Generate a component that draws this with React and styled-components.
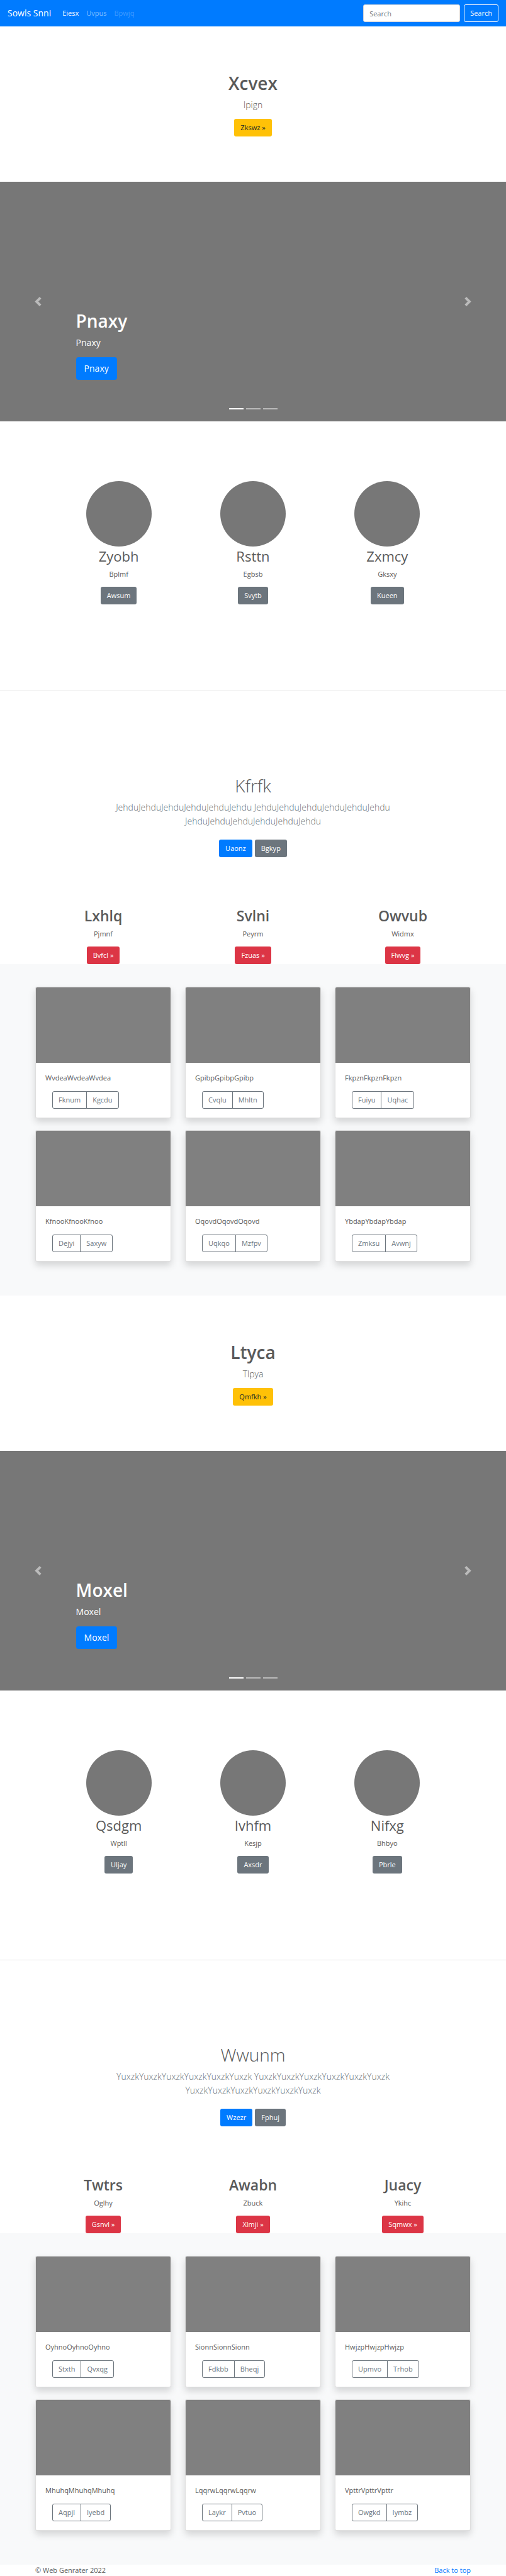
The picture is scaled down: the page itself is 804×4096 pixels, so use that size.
import React from "react";
import styled, { createGlobalStyle } from "styled-components";

const GlobalStyle = createGlobalStyle`
  *, *::before, *::after { box-sizing: border-box; }
  body {
    margin: 0;
    background: #fff;
    color: #5a5a5a;
    font-family: "Open Sans", "Noto Sans", sans-serif;
    font-size: 11px;
    line-height: 18px;
  }
  h1, h2, p { margin: 0; }
  a { text-decoration: none; }
`;

const tones = {
  primary: { bg: "#007bff", fg: "#fff" },
  secondary: { bg: "#6c757d", fg: "#fff" },
  warning: { bg: "#ffc107", fg: "#212529" },
  danger: { bg: "#dc3545", fg: "#fff" },
};

const ButtonLink = styled.a`
  display: inline-block;
  padding: ${(p) => (p.$large ? "7px 13px" : "5px 10px")};
  border-radius: ${(p) => (p.$large ? 4 : 3)}px;
  font-size: ${(p) => (p.$large ? 14 : 11)}px;
  line-height: ${(p) => (p.$large ? 22 : 18)}px;
  background: ${(p) => tones[p.$tone].bg};
  color: ${(p) => tones[p.$tone].fg};
`;

const Navbar = styled.nav`
  display: flex;
  align-items: center;
  height: 42px;
  padding: 0 12px;
  background: #007bff;
`;

const Brand = styled.a`
  margin-right: 12px;
  font-size: 14px;
  line-height: 22px;
  color: #fff;
`;

const NavList = styled.ul`
  display: flex;
  flex: 1;
  margin: 0;
  padding: 0;
  list-style: none;
`;

const NavLink = styled.a`
  display: block;
  padding: 6px;
  color: rgba(255, 255, 255, ${(p) => p.$alpha});
`;

const SearchForm = styled.form`
  display: flex;
  gap: 6px;
`;

const SearchInput = styled.input`
  width: 154px;
  height: 28px;
  padding: 0 9px;
  border: 1px solid #ced4da;
  border-radius: 3px;
  font: inherit;
  background: #fff;
  color: #495057;
  &::placeholder { color: #6c757d; opacity: 1; }
`;

const SearchButton = styled.button`
  height: 28px;
  padding: 0 9px;
  border: 1px solid #f8f9fa;
  border-radius: 3px;
  font: inherit;
  background: transparent;
  color: #f8f9fa;
`;

const Hero = styled.header`
  display: flex;
  flex-direction: column;
  align-items: center;
  padding: 72px 12px;
`;

const Display = styled.h1`
  margin-bottom: 6px;
  font-size: 28px;
  line-height: 36px;
  font-weight: ${(p) => (p.$light ? 300 : 600)};
`;

const Lead = styled.p`
  margin-bottom: ${(p) => p.$after}px;
  font-size: 14px;
  line-height: 22px;
  font-weight: ${(p) => (p.$regular ? 400 : 300)};
  color: ${(p) => (p.$muted ? "#6c757d" : "inherit")};
`;

const Carousel = styled.section`
  position: relative;
  display: flex;
  flex-direction: column;
  justify-content: flex-end;
  align-items: flex-start;
  height: 381px;
  padding: 0 15% 66px;
  background: #777;
  color: #fff;
`;

const CarouselControl = styled.button`
  position: absolute;
  top: 0;
  bottom: 0;
  ${(p) => p.$side}: 0;
  display: flex;
  align-items: center;
  justify-content: center;
  width: 15%;
  padding: 0;
  border: 0;
  background: none;
  opacity: 0.5;
`;

const Indicators = styled.ol`
  position: absolute;
  left: 15%;
  right: 15%;
  bottom: 19px;
  display: flex;
  justify-content: center;
  gap: 4px;
  margin: 0;
  padding: 0;
  list-style: none;
`;

const Indicator = styled.li`
  width: 23px;
  height: 2px;
  background: #fff;
  opacity: ${(p) => (p.$active ? 1 : 0.5)};
`;

const Columns = styled.section`
  display: grid;
  grid-template-columns: repeat(3, 1fr);
  max-width: ${(p) => p.$width}px;
  margin: 0 auto;
  padding-top: ${(p) => p.$top}px;
`;

const Column = styled.div`
  display: flex;
  flex-direction: column;
  align-items: center;
`;

const Circle = styled.div`
  width: 104px;
  height: 104px;
  border-radius: 50%;
  background: #777;
`;

const ColumnTitle = styled.h2`
  margin-bottom: 5px;
  font-size: ${(p) => (p.$strong ? 23 : 22)}px;
  line-height: 30px;
  font-weight: ${(p) => (p.$strong ? 600 : 400)};
`;

const ColumnText = styled.p`
  margin-bottom: 11px;
`;

const Divider = styled.hr`
  height: 1px;
  margin: 137px 0 0;
  border: 0;
  background: rgba(0, 0, 0, 0.1);
`;

const Jumbotron = styled.section`
  display: flex;
  flex-direction: column;
  align-items: center;
  max-width: 476px;
  margin: 0 auto;
  padding: 132px 0 78px;
  text-align: center;
`;

const ButtonRow = styled.div`
  display: flex;
  gap: 4px;
`;

const Album = styled.section`
  padding: 36px 12px 54px;
  background: #f8f9fa;
`;

const CardGrid = styled.div`
  display: grid;
  grid-template-columns: repeat(3, 1fr);
  gap: 19px 22px;
  max-width: 692px;
  margin: 0 auto;
`;

const Card = styled.article`
  border: 1px solid rgba(0, 0, 0, 0.125);
  border-radius: 3px;
  background: #fff;
  box-shadow: 0 6px 12px rgba(0, 0, 0, 0.15);
`;

const CardImage = styled.div`
  height: 120px;
  border-radius: 2px 2px 0 0;
  background: #808080;
`;

const CardBody = styled.div`
  padding: 15px 15px 14px;
`;

const CardText = styled.p`
  margin-bottom: 12px;
`;

const ButtonGroup = styled.div`
  display: flex;
  padding-left: 11px;
`;

const GroupButton = styled.button`
  height: 28px;
  padding: 0 9px;
  border: 1px solid #6c757d;
  font: inherit;
  background: transparent;
  color: #6c757d;
  &:first-child { border-radius: 3px 0 0 3px; }
  &:last-child { margin-left: -1px; border-radius: 0 3px 3px 0; }
`;

const Footer = styled.footer`
  display: flex;
  justify-content: space-between;
  max-width: 692px;
  margin: 0 auto;
`;

const FooterLink = styled.a`
  color: #007bff;
`;

const pages = [
  {
    hero: ["Xcvex", "Ipign", "Zkswz »"],
    slide: "Pnaxy",
    circles: [["Zyobh", "Bplmf", "Awsum"], ["Rsttn", "Egbsb", "Svytb"], ["Zxmcy", "Gksxy", "Kueen"]],
    jumbo: ["Kfrfk", "Jehdu", "Uaonz", "Bgkyp"],
    columns: [["Lxhlq", "Pjmnf", "Bvfcl »"], ["Svlni", "Peyrm", "Fzuas »"], ["Owvub", "Widmx", "Flwvg »"]],
    cards: [
      ["Wvdea", "Fknum", "Kgcdu"], ["Gpibp", "Cvqlu", "Mhltn"], ["Fkpzn", "Fuiyu", "Uqhac"],
      ["Kfnoo", "Dejyi", "Saxyw"], ["Oqovd", "Uqkqo", "Mzfpv"], ["Ybdap", "Zmksu", "Avwnj"],
    ],
  },
  {
    hero: ["Ltyca", "Tlpya", "Qmfkh »"],
    slide: "Moxel",
    circles: [["Qsdgm", "Wptll", "Uljay"], ["Ivhfm", "Kesjp", "Axsdr"], ["Nifxg", "Bhbyo", "Pbrle"]],
    jumbo: ["Wwunm", "Yuxzk", "Wzezr", "Fphuj"],
    columns: [["Twtrs", "Oglhy", "Gsnvl »"], ["Awabn", "Zbuck", "Xlmji »"], ["Juacy", "Ykihc", "Sqmwx »"]],
    cards: [
      ["Oyhno", "Stxth", "Qvxqg"], ["Sionn", "Fdkbb", "Bheqj"], ["Hwjzp", "Upmvo", "Trhob"],
      ["Mhuhq", "Aqpjl", "Iyebd"], ["Lqqrw", "Laykr", "Pvtuo"], ["Vpttr", "Owgkd", "Iymbz"],
    ],
  },
];

function Chevron({ side }) {
  return (
    <svg width="15" height="15" viewBox="0 0 8 8" fill="#fff" aria-hidden="true">
      {side === "left" ? (
        <path d="M5.25 0l-4 4 4 4 1.5-1.5L4.25 4l2.5-2.5L5.25 0z" />
      ) : (
        <path d="M2.75 0l-1.5 1.5L3.75 4l-2.5 2.5L2.75 8l4-4-4-4z" />
      )}
    </svg>
  );
}

function PageBlock({ page }) {
  const [title, sub, action] = page.hero;
  const [jumboTitle, word, first, second] = page.jumbo;
  const run = word.repeat(6);
  return (
    <>
      <Hero>
        <Display>{title}</Display>
        <Lead $after={11}>{sub}</Lead>
        <ButtonLink href="#" $tone="warning">{action}</ButtonLink>
      </Hero>

      <Carousel>
        <Display>{page.slide}</Display>
        <Lead $after={12} $regular>{page.slide}</Lead>
        <ButtonLink href="#" $tone="primary" $large>{page.slide}</ButtonLink>
        <CarouselControl type="button" $side="left" aria-label="Previous"><Chevron side="left" /></CarouselControl>
        <CarouselControl type="button" $side="right" aria-label="Next"><Chevron side="right" /></CarouselControl>
        <Indicators>
          <Indicator $active />
          <Indicator />
          <Indicator />
        </Indicators>
      </Carousel>

      <Columns $width={640} $top={95}>
        {page.circles.map(([name, text, label]) => (
          <Column key={name}>
            <Circle />
            <ColumnTitle>{name}</ColumnTitle>
            <ColumnText>{text}</ColumnText>
            <ButtonLink href="#" $tone="secondary">{label}</ButtonLink>
          </Column>
        ))}
      </Columns>
      <Divider />

      <Jumbotron>
        <Display as="h2" $light>{jumboTitle}</Display>
        <Lead $after={18} $muted>{`${run} ${run} ${run}`}</Lead>
        <ButtonRow>
          <ButtonLink href="#" $tone="primary">{first}</ButtonLink>
          <ButtonLink href="#" $tone="secondary">{second}</ButtonLink>
        </ButtonRow>
      </Jumbotron>

      <Columns $width={714} $top={0}>
        {page.columns.map(([name, text, label]) => (
          <Column key={name}>
            <ColumnTitle $strong>{name}</ColumnTitle>
            <ColumnText>{text}</ColumnText>
            <ButtonLink href="#" $tone="danger">{label}</ButtonLink>
          </Column>
        ))}
      </Columns>

      <Album>
        <CardGrid>
          {page.cards.map(([name, left, right]) => (
            <Card key={name}>
              <CardImage />
              <CardBody>
                <CardText>{name.repeat(3)}</CardText>
                <ButtonGroup>
                  <GroupButton type="button">{left}</GroupButton>
                  <GroupButton type="button">{right}</GroupButton>
                </ButtonGroup>
              </CardBody>
            </Card>
          ))}
        </CardGrid>
      </Album>
    </>
  );
}

export default function App() {
  return (
    <>
      <GlobalStyle />
      <Navbar>
        <Brand href="#">Sowls Snni</Brand>
        <NavList>
          <li><NavLink href="#" $alpha={1}>Eiesx</NavLink></li>
          <li><NavLink href="#" $alpha={0.5}>Uvpus</NavLink></li>
          <li><NavLink href="#" $alpha={0.25}>Bpwjq</NavLink></li>
        </NavList>
        <SearchForm>
          <SearchInput type="search" placeholder="Search" aria-label="Search" />
          <SearchButton type="button">Search</SearchButton>
        </SearchForm>
      </Navbar>
      <main>
        {pages.map((page) => (
          <PageBlock key={page.slide} page={page} />
        ))}
      </main>
      <Footer>
        <span>© Web Genrater 2022</span>
        <FooterLink href="#">Back to top</FooterLink>
      </Footer>
    </>
  );
}
